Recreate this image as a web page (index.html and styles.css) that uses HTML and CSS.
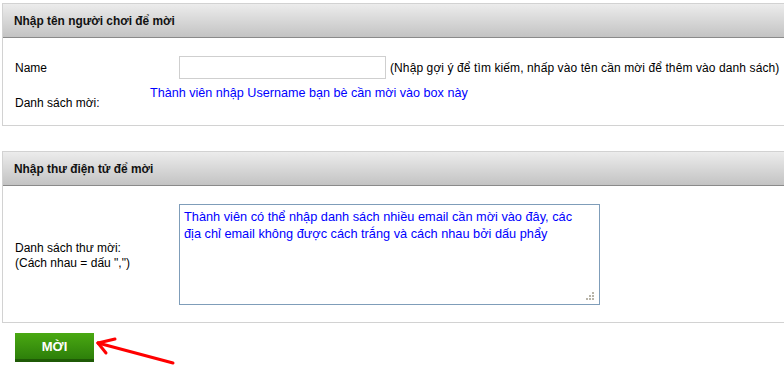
FILE: index.html
```html
<!DOCTYPE html>
<html lang="vi">
<head>
<meta charset="utf-8">
<title>Mời bạn</title>
<link rel="stylesheet" href="styles.css">
</head>
<body>
<div class="page">
  <section class="panel">
    <div class="panel-head">Nhập tên người chơi để mời</div>
    <div class="panel-body body-1">
      <div class="row row-name">
        <span class="label label-name">Name</span>
        <input class="name-input" type="text">
        <span class="hint">(Nhập gợi ý để tìm kiếm, nhấp vào tên cần mời để thêm vào danh sách)</span>
      </div>
      <div class="row row-list">
        <span class="label label-list">Danh sách mời:</span>
        <span class="blue-note">Thành viên nhập Username bạn bè cần mời vào box này</span>
      </div>
    </div>
  </section>

  <section class="panel panel-2">
    <div class="panel-head">Nhập thư điện tử để mời</div>
    <div class="panel-body body-2">
      <div class="label label-mail">Danh sách thư mời:<br>(Cách nhau = dấu ",")</div>
      <div class="mail-box">
        <p class="mail-text">Thành viên có thể nhập danh sách nhiều email cần mời vào đây, các địa chỉ email không được cách trắng và cách nhau bởi dấu phẩy</p>
        <svg class="grip" width="9" height="9" viewBox="0 0 9 9"><g fill="#b8b4a8"><rect x="6" y="0" width="2" height="2"/><rect x="3" y="3" width="2" height="2"/><rect x="6" y="3" width="2" height="2"/><rect x="0" y="6" width="2" height="2"/><rect x="3" y="6" width="2" height="2"/><rect x="6" y="6" width="2" height="2"/></g></svg>
      </div>
    </div>
  </section>

  <div class="actions">
    <button class="invite-btn" type="button">MỜI</button>
    <svg class="arrow" width="90" height="32" viewBox="0 0 90 32">
      <g stroke="#ff0000" stroke-width="3" stroke-linecap="round" fill="none">
        <path d="M3 10 L78 30"/>
        <path d="M3 10 L20 6"/>
        <path d="M3 10 L11 20"/>
      </g>
    </svg>
  </div>
</div>
</body>
</html>
```
FILE: styles.css
```css
html, body {
  margin: 0;
  padding: 0;
  overflow: hidden;
  background: #ffffff;
}
body {
  font-family: "Liberation Sans", Arial, sans-serif;
  font-size: 12px;
  color: #000;
}
.page {
  padding: 3px 0 0 2px;
  width: 800px;
}
.panel {
  border: 1px solid #d2d2d2;
  background: #fff;
}
.panel-2 {
  margin-top: 25px;
}
.panel-head {
  height: 33px;
  line-height: 34px;
  padding-left: 11px;
  font-weight: bold;
  font-size: 11.9px;
  color: #111;
  background: linear-gradient(#ececec, #c3c3c3);
  border-bottom: 1px solid #8a8a8a;
}
.body-1 {
  height: 87px;
  padding: 18px 0 0 12px;
  box-sizing: border-box;
}
.row {
  display: flex;
  align-items: center;
}
.label-name {
  width: 164px;
}
.name-input {
  width: 207px;
  height: 23px;
  box-sizing: border-box;
  border: 1px solid #cfcfcf;
  margin: 0 4px 0 0;
  padding: 0;
}
.hint {
  white-space: nowrap;
  letter-spacing: 0.1px;
}
.row-list {
  align-items: flex-start;
  margin-top: 7px;
}
.label-list {
  width: 135px;
  padding-top: 10px;
}
.blue-note {
  color: #0000ff;
  font-size: 12.6px;
}
.body-2 {
  height: 136px;
  display: flex;
  align-items: center;
  padding-left: 12px;
  box-sizing: border-box;
}
.label-mail {
  width: 164px;
  line-height: 15px;
  margin-top: 4px;
}
.mail-box {
  position: relative;
  width: 421px;
  height: 101px;
  box-sizing: border-box;
  border: 1px solid #7f9db9;
  padding: 3px 4px 2px;
  margin-top: 1px;
}
.mail-text {
  margin: 0;
  color: #0000ff;
  font-size: 12.75px;
  line-height: 17px;
  width: 400px;
}
.grip {
  position: absolute;
  right: 4px;
  bottom: 3px;
}
.actions {
  display: flex;
  align-items: flex-start;
  padding: 10px 0 0 13px;
}
.invite-btn {
  width: 79px;
  height: 29px;
  border: 0;
  border-bottom: 3px solid #1f5a06;
  background: linear-gradient(#4aa912, #2d7f0a);
  color: #fff;
  font-family: "Liberation Sans", Arial, sans-serif;
  font-weight: bold;
  font-size: 13px;
  padding: 0;
}
.arrow {
  margin: 0 0 0 1px;
}
```
